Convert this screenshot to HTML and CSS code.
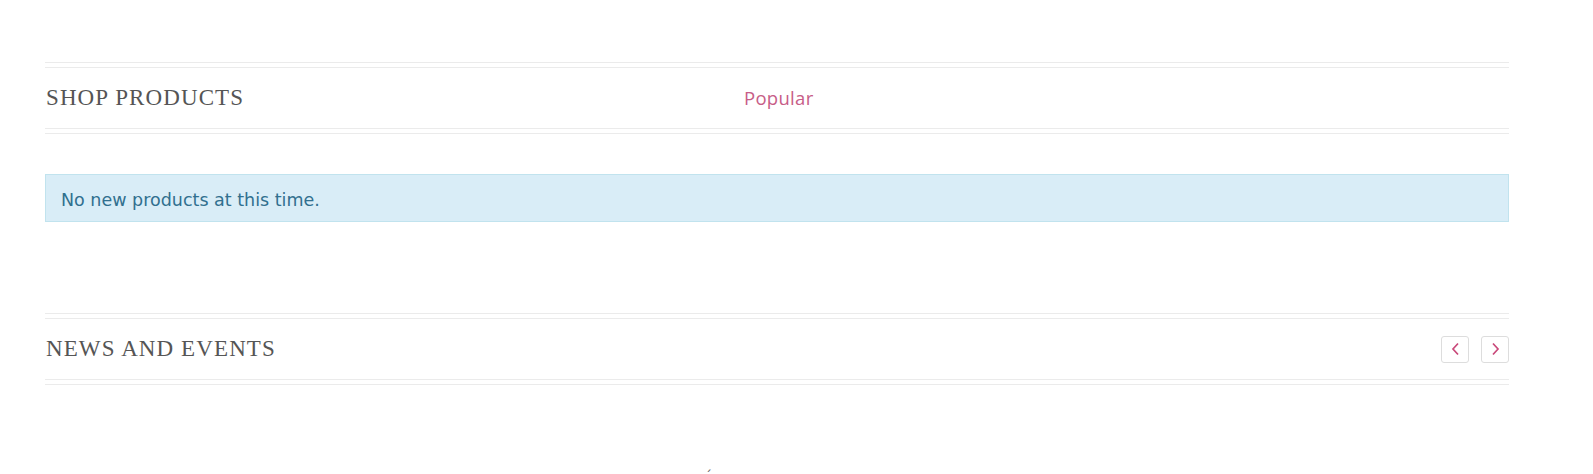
FILE: index.html
```html
<!DOCTYPE html>
<html lang="en">
<head>
<meta charset="utf-8">
<title>Shop</title>
<link rel="stylesheet" href="styles.css">
</head>
<body>
<div class="page">
  <div class="section-head">
    <div class="head-bar">
      <h2 class="head-title head-title-wide">SHOP PRODUCTS</h2>
      <a class="tab-link" href="#">Popular</a>
    </div>
  </div>
  <div class="alert-info">No new products at this time.</div>
  <div class="section-head section-news">
    <div class="head-bar">
      <h2 class="head-title">NEWS AND EVENTS</h2>
      <div class="nav-btns">
        <button class="nav-btn" aria-label="Previous">
          <svg width="9" height="14" viewBox="0 0 9 14"><path d="M7 1.5 L2 7 L7 12.5" fill="none" stroke="#c9497a" stroke-width="1.7"/></svg>
        </button>
        <button class="nav-btn" aria-label="Next">
          <svg width="9" height="14" viewBox="0 0 9 14"><path d="M2 1.5 L7 7 L2 12.5" fill="none" stroke="#c9497a" stroke-width="1.7"/></svg>
        </button>
      </div>
    </div>
  </div>
  <div class="tail">´</div>
</div>
</body>
</html>
```

FILE: styles.css
```css
html, body {
  margin: 0;
  padding: 0;
  background: #ffffff;
}
body {
  height: 474px;
  overflow: hidden;
}
.page {
  width: 1464px;
  margin-left: 45px;
  padding-top: 62px;
}
.section-head {
  border-top: 1px solid #ebebeb;
  border-bottom: 1px solid #ebebeb;
  padding: 4px 0;
}
.section-news {
  margin-top: 91px;
}
.head-bar {
  border-top: 1px solid #ebebeb;
  border-bottom: 1px solid #ebebeb;
  height: 60px;
  display: flex;
  align-items: center;
}
.head-title {
  margin: 0;
  padding-left: 1px;
  font-family: "Liberation Serif", "Times New Roman", serif;
  font-weight: normal;
  font-size: 23px;
  letter-spacing: 1.1px;
  line-height: 60px;
  color: #555555;
  flex: 1;
}
.head-title-wide {
  flex: 0 0 698px;
}
.tab-link {
  font-family: "Open Sans", Lato, sans-serif;
  font-size: 18.5px;
  letter-spacing: 0.3px;
  line-height: 60px;
  color: #c75d87;
  text-decoration: none;
}
.alert-info {
  margin-top: 40px;
  background: #d9edf7;
  border: 1px solid #c1e3ee;
  color: #31708f;
  font-family: "DejaVu Sans", Verdana, sans-serif;
  font-size: 17.5px;
  line-height: 18px;
  padding: 16px 15px 12px;
}
.nav-btns {
  display: flex;
  gap: 12px;
}
.nav-btn {
  width: 28px;
  height: 27px;
  padding: 0;
  margin: 0;
  background: #ffffff;
  border: 1px solid #dddddd;
  border-radius: 3px;
  display: flex;
  align-items: center;
  justify-content: center;
}
.tail {
  padding-left: 660px;
  margin-top: 83px;
  font-family: "DejaVu Sans", sans-serif;
  font-size: 14px;
  line-height: 16px;
  color: #666666;
}
```
